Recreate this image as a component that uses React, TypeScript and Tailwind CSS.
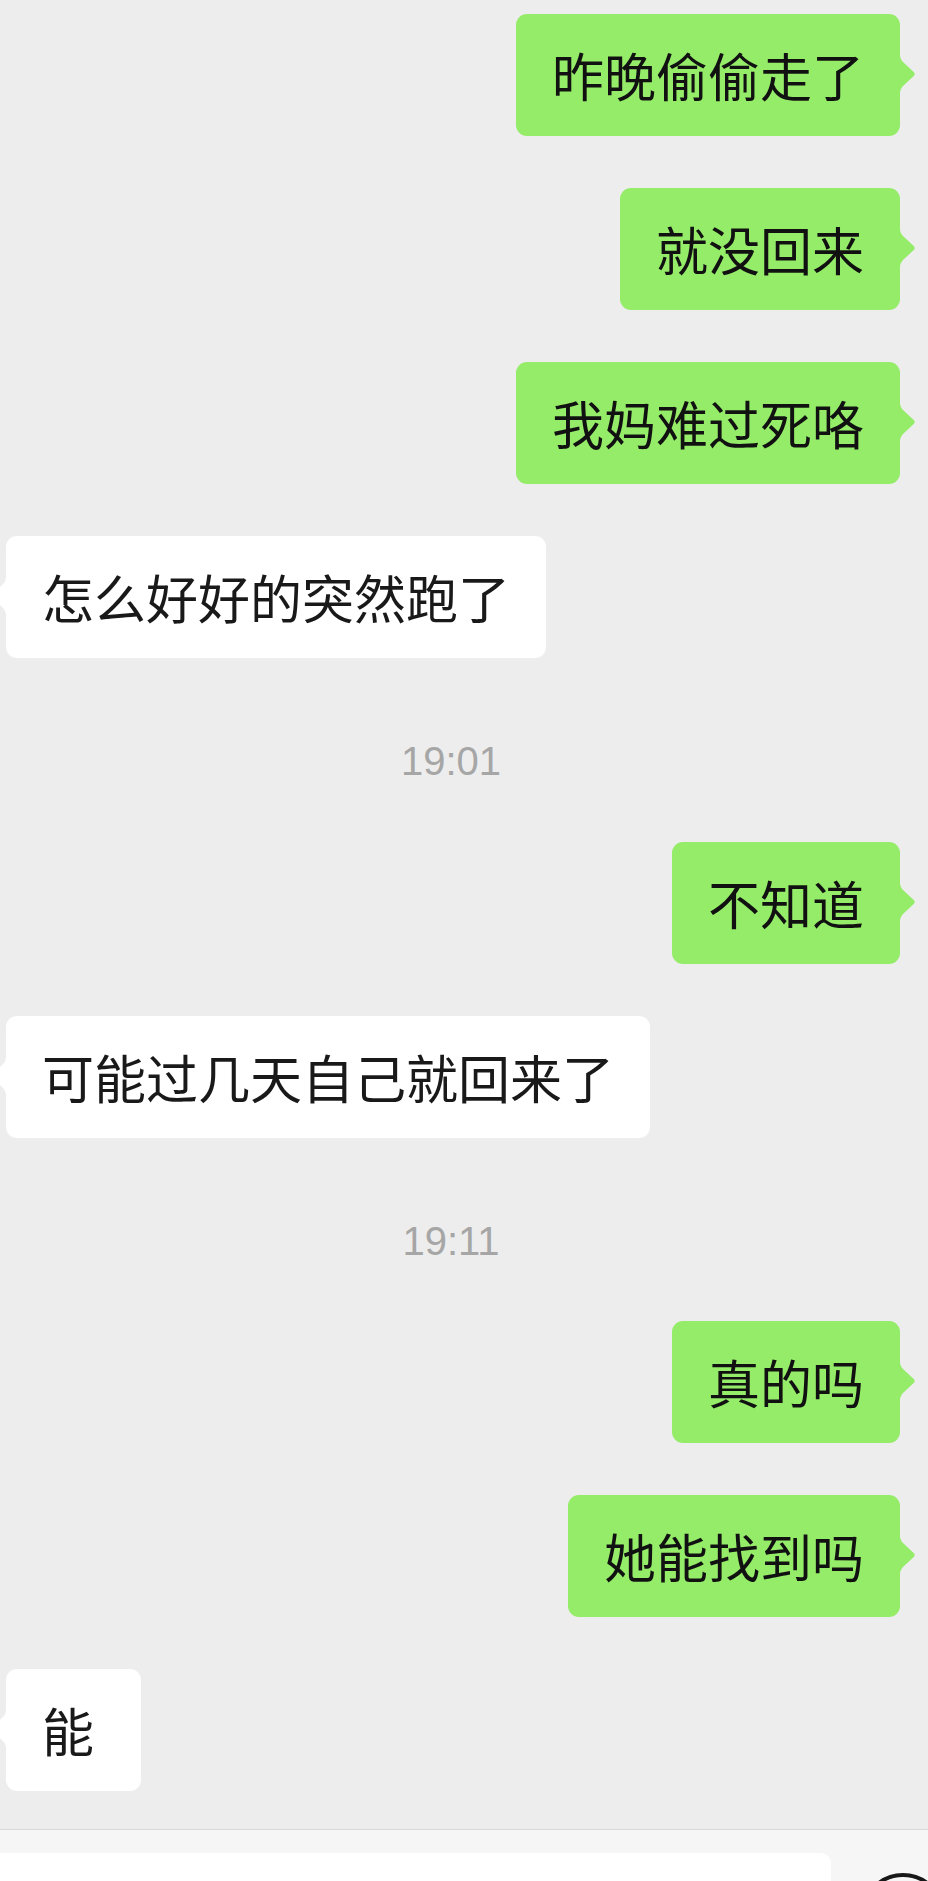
import React from "react";

type Msg =
  | { kind: "me"; text: string; mt: string }
  | { kind: "other"; text: string; mt: string; minW?: string }
  | { kind: "time"; text: string; mt: string };

const messages: Msg[] = [
  { kind: "me", text: "昨晚偷偷走了", mt: "mt-0" },
  { kind: "me", text: "就没回来", mt: "mt-[52px]" },
  { kind: "me", text: "我妈难过死咯", mt: "mt-[52px]" },
  { kind: "other", text: "怎么好好的突然跑了", mt: "mt-[52px]" },
  { kind: "time", text: "19:01", mt: "mt-[83px]" },
  { kind: "me", text: "不知道", mt: "mt-[61px]" },
  { kind: "other", text: "可能过几天自己就回来了", mt: "mt-[52px]" },
  { kind: "time", text: "19:11", mt: "mt-[83px]" },
  { kind: "me", text: "真的吗", mt: "mt-[60px]" },
  { kind: "me", text: "她能找到吗", mt: "mt-[52px]" },
  { kind: "other", text: "能", mt: "mt-[52px]", minW: "min-w-[135px]" },
];

function RightTail() {
  return (
    <svg
      className="absolute top-[41px] -right-[16px] w-[17px] h-[38px]"
      viewBox="0 0 17 38"
    >
      <path
        d="M0,0 L1,0 C1,3 2.5,5.5 4.5,7.5 L15,17.2 Q16.5,19 15,20.8 L4.5,30.5 C2.5,32.5 1,35 1,38 L0,38 Z"
        fill="#95ec69"
      />
    </svg>
  );
}

function LeftTail() {
  return (
    <svg
      className="absolute top-[41px] -left-[16px] w-[17px] h-[38px]"
      viewBox="0 0 17 38"
    >
      <path
        d="M17,0 L16,0 C16,3 14.5,5.5 12.5,7.5 L2,17.2 Q0.5,19 2,20.8 L12.5,30.5 C14.5,32.5 16,35 16,38 L17,38 Z"
        fill="#ffffff"
      />
    </svg>
  );
}

export default function App() {
  return (
    <div className="w-[928px] h-[1881px] overflow-hidden bg-[#ededed] flex flex-col font-['Noto_Sans_CJK_SC','Noto_Sans',sans-serif]">
      <div className="flex flex-col pt-[14px]">
        {messages.map((m, i) => {
          if (m.kind === "time") {
            return (
              <div
                key={i}
                className={`${m.mt} h-[40px] leading-[40px] flex justify-center pr-[26px] text-[40px] text-[#a6a6a6] font-['Liberation_Sans',sans-serif]`}
              >
                {m.text}
              </div>
            );
          }
          if (m.kind === "me") {
            return (
              <div key={i} className={`${m.mt} flex justify-end pr-[28px]`}>
                <div className="relative bg-[#95ec69] rounded-[11px] px-[36px] py-[35px] text-[52px] leading-[52px] text-[#111111] whitespace-nowrap">
                  {m.text}
                  <RightTail />
                </div>
              </div>
            );
          }
          return (
            <div key={i} className={`${m.mt} flex justify-start pl-[6px]`}>
              <div
                className={`relative bg-white rounded-[11px] px-[36px] py-[35px] text-[52px] leading-[52px] text-[#191919] whitespace-nowrap ${m.minW ?? ""}`}
              >
                {m.text}
                <LeftTail />
              </div>
            </div>
          );
        })}
      </div>
      <div className="mt-[38px] border-t border-[#d9d9d9] bg-[#f6f6f6] flex-1 flex items-start pt-[23px]">
        <div className="w-[831px] h-[200px] bg-white rounded-tr-[10px] shrink-0" />
        <div className="ml-[28px] mt-[18px] shrink-0">
          <svg width="88" height="88" viewBox="0 0 88 88">
            <circle cx="44" cy="44" r="40" fill="none" stroke="#181818" strokeWidth="4" />
            <circle cx="31" cy="36" r="4" fill="#181818" />
            <circle cx="57" cy="36" r="4" fill="#181818" />
            <path d="M26,52 Q44,70 62,52" fill="none" stroke="#181818" strokeWidth="4" strokeLinecap="round" />
          </svg>
        </div>
      </div>
    </div>
  );
}
